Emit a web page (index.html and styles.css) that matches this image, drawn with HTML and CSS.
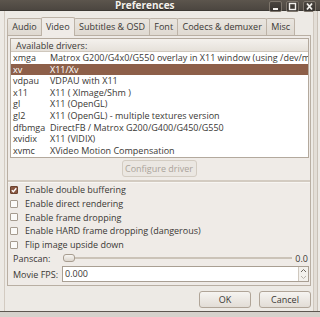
FILE: index.html
```html
<!DOCTYPE html>
<html>
<head>
<meta charset="utf-8">
<link rel="stylesheet" href="styles.css">
</head>
<body>
<div class="win">
  <div class="titlebar">
    <span class="title">Preferences</span>
    <div class="wbtns">
      <span class="wbtn"><svg width="11" height="9" viewBox="0 0 11 9"><rect x="3" y="6" width="5" height="2" fill="#f2f0ec"/></svg></span>
      <span class="wbtn"><svg width="11" height="9" viewBox="0 0 11 9"><rect x="2.5" y="1.5" width="6" height="6" fill="none" stroke="#f2f0ec" stroke-width="1.4"/></svg></span>
      <span class="wbtn"><svg width="11" height="9" viewBox="0 0 11 9"><path d="M3 1.5 L8 7.5 M8 1.5 L3 7.5" stroke="#f2f0ec" stroke-width="1.8"/></svg></span>
    </div>
  </div>
  <div class="body">
    <div class="tabs">
      <span class="tab">Audio</span>
      <span class="tab active">Video</span>
      <span class="tab">Subtitles &amp; OSD</span>
      <span class="tab">Font</span>
      <span class="tab">Codecs &amp; demuxer</span>
      <span class="tab">Misc</span>
    </div>
    <div class="panel">
      <div class="list">
        <div class="lhead">Available drivers:</div>
        <div class="row"><span class="c1">xmga</span><span class="c2">Matrox G200/G4x0/G550 overlay in X11 window (using /dev/mga_vid)</span></div>
        <div class="row sel"><span class="c1">xv</span><span class="c2">X11/Xv</span></div>
        <div class="row"><span class="c1">vdpau</span><span class="c2">VDPAU with X11</span></div>
        <div class="row"><span class="c1">x11</span><span class="c2">X11 ( XImage/Shm )</span></div>
        <div class="row"><span class="c1">gl</span><span class="c2">X11 (OpenGL)</span></div>
        <div class="row"><span class="c1">gl2</span><span class="c2">X11 (OpenGL) - multiple textures version</span></div>
        <div class="row"><span class="c1">dfbmga</span><span class="c2">DirectFB / Matrox G200/G400/G450/G550</span></div>
        <div class="row"><span class="c1">xvidix</span><span class="c2">X11 (VIDIX)</span></div>
        <div class="row"><span class="c1">xvmc</span><span class="c2">XVideo Motion Compensation</span></div>
      </div>
      <div class="cfg"><span class="btn disabled">Configure driver</span></div>
      <div class="sep"></div>
      <div class="chk"><span class="box on"><svg width="8" height="8" viewBox="0 0 8 8"><path d="M1.8 4.2 L3.4 5.8 L6.3 2.2" fill="none" stroke="#fff" stroke-width="1.4"/></svg></span>Enable double buffering</div>
      <div class="chk"><span class="box"></span>Enable direct rendering</div>
      <div class="chk"><span class="box"></span>Enable frame dropping</div>
      <div class="chk"><span class="box"></span>Enable HARD frame dropping (dangerous)</div>
      <div class="chk"><span class="box"></span>Flip image upside down</div>
      <div class="form">
        <span class="lbl">Panscan:</span>
        <div class="slider"><div class="track"><span class="knob"></span></div><span class="sval">0.0</span></div>
        <span class="lbl">Movie FPS:</span>
        <div class="spin"><span class="val">0.000</span><span class="arrows"><svg width="9" height="14" viewBox="0 0 9 14"><path d="M2 5 L4.5 2.5 L7 5" fill="none" stroke="#6d6860" stroke-width="1"/><path d="M2 9 L4.5 11.5 L7 9" fill="none" stroke="#b8b2aa" stroke-width="1"/></svg></span></div>
      </div>
    </div>
    <div class="actions">
      <span class="btn">OK</span>
      <span class="btn">Cancel</span>
    </div>
  </div>
  <div class="bottom"></div>
</div>
</body>
</html>
```

FILE: styles.css
```css
html, body {
  margin: 0;
  padding: 0;
  background: #edeae5;
}
.win {
  width: 320px;
  height: 317px;
  overflow: hidden;
  background: #edeae5;
  font-family: "Open Sans", "DejaVu Sans", sans-serif;
  font-size: 9px;
  color: #3a3835;
  display: flex;
  flex-direction: column;
}
.titlebar {
  height: 11px;
  flex: none;
  display: flex;
  align-items: flex-start;
  background: linear-gradient(#5c554d, #4a453f);
  box-shadow: inset 0 -1px #3d3934;
}
.title {
  padding-left: 115px;
  font-weight: bold;
  font-size: 10px;
  color: #f4f1ec;
  text-shadow: 0 1px #2a2724;
  line-height: 11px;
}
.wbtns {
  margin-left: auto;
  display: flex;
  gap: 4px;
  padding-right: 4px;
  margin-top: 1px;
}
.wbtn {
  width: 11px;
  height: 9px;
  border: 1px solid #7d756b;
  border-radius: 2px;
  background: linear-gradient(#4a453f, #36322e);
  display: flex;
}
.body {
  flex: 1;
  display: flex;
  flex-direction: column;
  padding: 6px 9px 0 7px;
  box-shadow: inset 4px 0 #edeae5, inset 5px 0 #d3cbc1, inset -2px 0 #edeae5, inset -3px 0 #c9c1b7, inset -6px 0 #e3ded7, inset -7px 0 #d0c8be;
}
.tabs {
  display: flex;
  align-items: flex-end;
  height: 18px;
  position: relative;
  z-index: 1;
}
.tab {
  height: 17px;
  box-sizing: border-box;
  padding: 0 4.2px;
  line-height: 16px;
  background: linear-gradient(#e9e5df, #dfd9d1);
  border: 1px solid #bdb3a7;
  border-bottom: none;
  border-radius: 2px 2px 0 0;
  margin-right: -1px;
  color: #3a3835;
}
.tab.active {
  height: 19px;
  margin-bottom: -1px;
  background: #efebe7;
  line-height: 18px;
}
.panel {
  height: 251px;
  box-sizing: border-box;
  border: 1px solid #b9afa3;
  background: #efebe7;
  display: flex;
  flex-direction: column;
  padding-top: 2px;
}
.list {
  margin: 0 1px 0 2px;
  border: 1px solid #b3a99d;
  background: #fff;
  overflow: hidden;
  height: 120px;
  box-sizing: border-box;
}
.lhead {
  height: 13px;
  line-height: 13px;
  padding-left: 5px;
  background: linear-gradient(#f4f1ed, #e6e1da);
  border-bottom: 1px solid #cfc7bc;
  box-sizing: border-box;
}
.row {
  height: 11.6px;
  line-height: 11.6px;
  display: flex;
  white-space: nowrap;
}
.row.sel {
  background: #8d5f49;
  color: #fff;
}
.c1 {
  width: 37px;
  padding-left: 2px;
  flex: none;
}
.c2 {
  flex: none;
}
.cfg {
  display: flex;
  justify-content: center;
  margin-top: 2px;
}
.btn {
  display: inline-flex;
  align-items: center;
  justify-content: center;
  height: 17px;
  box-sizing: border-box;
  border: 1px solid #b0a598;
  border-radius: 3px;
  background: linear-gradient(#f6f4f1, #e2ddd6);
  color: #3a3835;
}
.cfg .btn {
  width: 75px;
}
.btn.disabled {
  border-color: #d3ccc2;
  background: #ebe7e2;
  color: #aaa39a;
}
.sep {
  height: 2px;
  margin-top: 3px;
  background: #d3cbc1;
  border-bottom: 1px solid #f7f5f2;
}
.chk {
  height: 13.7px;
  display: flex;
  align-items: center;
  gap: 7px;
  padding-left: 2px;
}
.box {
  width: 8px;
  height: 8px;
  box-sizing: border-box;
  border: 1px solid #a59b8f;
  background: #fbfaf8;
  border-radius: 1px;
  display: flex;
  align-items: center;
  justify-content: center;
}
.box.on {
  background: #8a5843;
  border-color: #6d432f;
}
.box svg { flex: none; }
.form {
  display: grid;
  grid-template-columns: 54px 1fr;
  grid-template-rows: 14px 16px;
  row-gap: 1px;
  margin-right: 1px;
  margin-top: 0;
}
.lbl {
  padding-left: 5px;
  display: flex;
  align-items: center;
}
.slider {
  display: flex;
  align-items: center;
}
.track {
  flex: 1;
  height: 2px;
  background: #cbc3b8;
  position: relative;
  margin-left: 1px;
  display: flex;
  align-items: center;
}
.knob {
  position: absolute;
  left: 0;
  top: -3px;
  width: 12px;
  height: 8px;
  box-sizing: border-box;
  border: 1px solid #a89d90;
  border-radius: 3px;
  background: linear-gradient(#f7f5f2, #dcd6ce);
}
.sval {
  width: 16px;
  text-align: right;
  padding-right: 1px;
}
.spin {
  display: flex;
  border: 1px solid #a99f93;
  background: #fff;
  height: 16px;
  box-sizing: border-box;
}
.val {
  flex: 1;
  padding-left: 2px;
  line-height: 14px;
}
.arrows {
  width: 9px;
  border-left: 1px solid #cfc8be;
  background: #f3f1ed;
  display: flex;
}
.actions {
  display: flex;
  justify-content: flex-end;
  gap: 8px;
  margin-top: 5px;
}
.actions .btn {
  width: 52px;
}
.bottom {
  height: 5px;
  flex: none;
  background: #d6d2cc;
  border-top: 1px solid #5d5750;
}
```
